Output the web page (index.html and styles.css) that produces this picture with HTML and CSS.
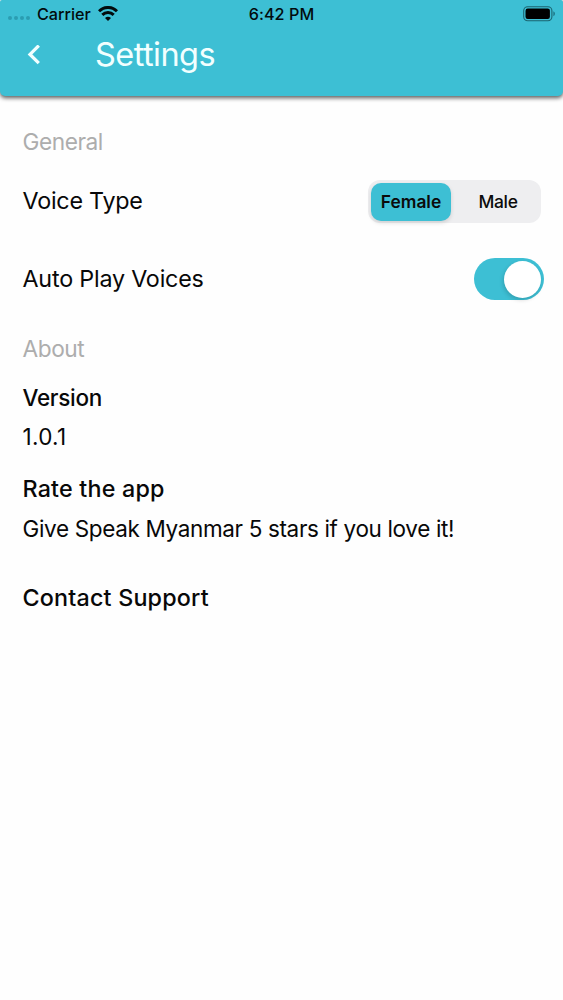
FILE: index.html
```html
<!DOCTYPE html>
<html lang="en">
<head>
<meta charset="utf-8">
<title>Settings</title>
<link rel="stylesheet" href="styles.css">
</head>
<body>
<header class="header">
  <div class="status">
    <div class="carrier">
      <span class="dots"><i></i><i></i><i></i><i></i></span>
      <span class="carrier-name">Carrier</span>
      <svg class="wifi" width="20" height="15" viewBox="0 0 20 15" fill="none" stroke="#020b0d" stroke-width="3">
        <path d="M1 5.3C6 .2 14 .2 19 5.3"/>
        <path d="M4.3 8.9C7.5 5.8 12.5 5.8 15.7 8.9"/>
        <path d="M10 15L7 11.9Q10 9.6 13 11.9Z" fill="#020b0d" stroke="none"/>
      </svg>
    </div>
    <span class="time">6:42 PM</span>
    <svg class="battery" width="33" height="16" viewBox="0 0 33 16">
      <rect x=".7" y=".7" width="28.2" height="14" rx="4" fill="none" stroke="#1b6470" stroke-width="1.1"/>
      <rect x="2.5" y="2.6" width="24.4" height="10.3" rx="2.2" fill="#000"/>
      <path d="M30.3 5.2Q32 6 32 7.7T30.3 10.2Z" fill="#1e7787"/>
    </svg>
  </div>
  <div class="nav">
    <svg class="back" width="14" height="20" viewBox="0 0 14 20" fill="none" stroke="#f2ffff" stroke-width="3.3">
      <path d="M12.8 .6L4 9.4L12.8 18.2"/>
    </svg>
    <h1 class="title">Settings</h1>
  </div>
</header>
<main class="content">
  <h2 class="section general">General</h2>
  <div class="row voice">
    <span class="label voice-label">Voice Type</span>
    <div class="segmented"><span class="segment active">Female</span><span class="segment male">Male</span></div>
  </div>
  <div class="row auto">
    <span class="label auto-label">Auto Play Voices</span>
    <span class="switch"><i class="knob"></i></span>
  </div>
  <h2 class="section about">About</h2>
  <div class="item version">
    <h3 class="name version-name">Version</h3>
    <p class="detail number">1.0.1</p>
  </div>
  <div class="item rate">
    <h3 class="name rate-name">Rate the app</h3>
    <p class="detail message">Give Speak Myanmar 5 stars if you love it!</p>
  </div>
  <div class="item contact">
    <h3 class="name contact-name">Contact Support</h3>
  </div>
</main>
</body>
</html>
```
FILE: styles.css
```css
* { box-sizing: border-box; margin: 0; padding: 0; }
body { min-height: 1000px; background: #fefefe; color: #080808; font-family: Inter, "Liberation Sans", sans-serif; font-size: 23.3px; line-height: 30px; white-space: nowrap; }
.header { height: 96px; background: #3dbfd4; border-radius: 2px 2px 5px 5px; box-shadow: 0 2px 4px rgba(0,0,0,.65); }
.status { display: grid; grid-template-columns: 1fr auto 1fr; align-items: center; height: 27px; padding: 0 7px 0 8px; font-size: 16.2px; line-height: 20px; font-weight: 500; color: #020b0d; }
.carrier { display: flex; align-items: center; }
.dots { display: flex; gap: 2px; padding-top: 9px; margin-right: 7px; }
.dots i { width: 4px; height: 4px; border-radius: 50%; background: #2b9db1; }
.wifi { margin-left: 7px; }
.time { letter-spacing: .05px; margin-right: 1px; }
.battery { justify-self: end; }
.nav { display: flex; align-items: center; height: 56px; padding-left: 26px; }
.title { margin-left: 55px; font-size: 32.5px; line-height: 40px; font-weight: 400; letter-spacing: -.55px; color: #f2ffff; }
.content { padding: 31px 20px 0 22.5px; }
.section { height: 30px; font-size: 22.7px; font-weight: 400; letter-spacing: -.45px; color: #adadad; }
.row { display: flex; align-items: center; justify-content: space-between; }
.label { letter-spacing: -.23px; }
.auto-label { letter-spacing: -.2px; }
.voice { height: 44px; margin-top: 22px; }
.segmented { display: flex; width: 173px; height: 43px; padding: 3px; margin-right: 2px; border-radius: 12px; background: #eeeef0; font-size: 17.4px; line-height: 37px; text-align: center; color: #0b0b0b; }
.segment { flex: 1; }
.active { flex: 0 0 80px; height: 38px; border-radius: 10px; background: #3dbfd4; font-weight: 600; box-shadow: 0 2px 4px rgba(0,0,0,.13); }
.male { padding-left: 7px; font-weight: 500; letter-spacing: -.3px; }
.auto { height: 42px; margin-top: 35px; }
.switch { display: flex; justify-content: flex-end; width: 70px; height: 42px; padding: 3px; margin-right: -1px; border-radius: 21px; background: #3dbfd4; }
.knob { width: 37px; height: 37px; border-radius: 50%; background: #fff; box-shadow: -1px 2px 4px rgba(0,0,0,.16); }
.about { margin-top: 34px; }
.name { font-size: 23.3px; font-weight: 500; letter-spacing: .2px; }
.version { margin-top: 19px; }
.version-name { font-size: 22.5px; letter-spacing: -.3px; }
.detail { margin-top: 9px; font-size: 22.5px; }
.number { letter-spacing: .3px; }
.message { margin-top: 10px; letter-spacing: -.35px; }
.rate { margin-top: 22px; }
.contact { margin-top: 39px; }
```
